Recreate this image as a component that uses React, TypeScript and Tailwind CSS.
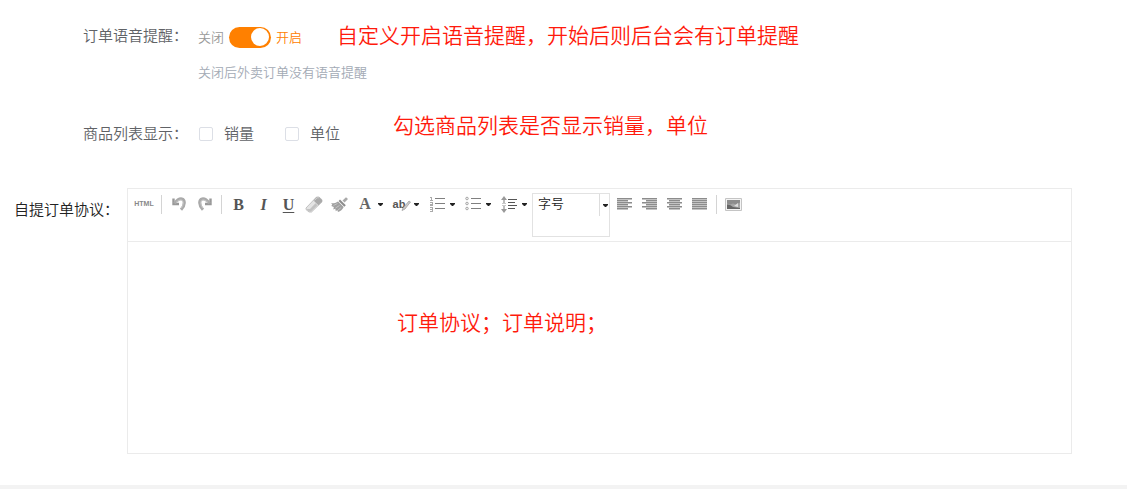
import { useState, type ReactNode } from "react";

const listLines = [3, 8, 13];

function ToolButton({ label, className = "w-[25px]", children }: { label: string; className?: string; children: ReactNode }) {
  return (
    <button type="button" aria-label={label} title={label} className={`flex h-[22px] shrink-0 items-center justify-center ${className}`}>
      {children}
    </button>
  );
}

function Caret() {
  return (
    <svg width="5" height="3" viewBox="0 0 5 3" className="shrink-0" aria-hidden="true">
      <path d="M0 0h5v1L3 3H2L0 1z" fill="#222" />
    </svg>
  );
}

/* Icon with a drop arrow beside it */
function MenuButton({ label, children }: { label: string; children: ReactNode }) {
  return (
    <button type="button" aria-label={label} title={label} className="flex h-[22px] w-9 shrink-0 items-center">
      <span className="flex w-[26px] items-center justify-center">{children}</span>
      <Caret />
    </button>
  );
}

function Separator() {
  return <span className="mx-1 mt-0.5 h-[19px] w-px shrink-0 bg-[#d4d4d4]" />;
}

function UndoIcon({ flip = false }: { flip?: boolean }) {
  return (
    <svg width="14" height="14" viewBox="0 0 14 14" className={flip ? "-scale-x-100" : ""} aria-hidden="true">
      <path d="M1.500 1.500v5.500h5.500" fill="none" stroke="#999" strokeWidth="2.400" />
      <path d="M2.500 6.500C5 3 7.500 1.500 9.800 1.900c3.400.7 3.600 6.300-.8 10.900" fill="none" stroke="#aaa" strokeWidth="3" />
      <path d="M4 5.500C6 3.500 8 2.700 9.300 3c2.600.6 2.400 4.500 0 8.200" fill="none" stroke="#c9c9c9" strokeWidth="1" />
    </svg>
  );
}

function EraserIcon() {
  return (
    <svg width="18" height="17" viewBox="0 0 18 17" aria-hidden="true">
      <path d="M1 12 11.500 1h2.500l3 2.800v2L6.500 16H4l-3-2.500z" fill="#e4e4e4" stroke="#b5b5b5" strokeWidth=".8" />
      <path d="m8.500 4.500 3-3.200H14l3 2.700v1.800l-3.600 3.400z" fill="#aaa" />
      <path d="m9.500 4.500 2.700-2.700h1.600" fill="none" stroke="#ccc" />
      <path d="M1.500 13 4 15.500h2l6.500-6.200-2-2L5 13z" fill="#c2c2c2" />
    </svg>
  );
}

function BrushIcon() {
  return (
    <svg width="17" height="15" viewBox="0 0 17 15" aria-hidden="true">
      <path d="M11.500 3.500 15 .3 17 2l-3.400 3.500z" fill="#aaa" />
      <path d="m9 2.600 5.800 5.600-1.500 1.500L7.600 4z" fill="#8c8c8c" />
      <path d="m7 4.500 5.700 5.600C11.500 12.500 9.500 14.500 7 15l-.7-2-1.500 1.300-.5-2.500-2 .8.500-2.600L.3 9l1-1.500L0 6.300C2.500 6.500 5 6 7 4.500z" fill="#a0a0a0" />
      <path d="m2.500 8.500 4-2M4.500 11l4-2.500M7 13l3.200-2.500" stroke="#ccc" strokeWidth=".8" />
    </svg>
  );
}

function OrderedIcon() {
  return (
    <svg width="16" height="16" viewBox="0 0 16 16" shapeRendering="crispEdges" aria-hidden="true">
      {listLines.map((y) => (
        <path key={y} d={`M6 ${y - 0.5}h10`} stroke="#808080" />
      ))}
      <path d="M1 1.500h1v3M1 4.500h3M1 6.500h2.500v1.500H1v1.500h3M1 11.500h2.500v4H1M1 13.500h2" fill="none" stroke="#aaa" />
    </svg>
  );
}

function BulletIcon() {
  return (
    <svg width="16" height="16" viewBox="0 0 16 16" aria-hidden="true">
      {listLines.map((y) => (
        <g key={y}>
          <path d={`M6 ${y - 0.5}h10`} stroke="#808080" />
          <circle cx="2" cy={y - 0.5} r="1.300" fill="#eee" stroke="#999" strokeWidth=".8" />
        </g>
      ))}
    </svg>
  );
}

function LineHeightIcon() {
  return (
    <svg width="17" height="17" viewBox="0 0 17 17" aria-hidden="true">
      <path d="M7 3.500h9M7 6.500h7M7 9.500h9M7 12.500h7" stroke="#555" strokeWidth="1.200" />
      <path d="M3 2v5M3 10v5" stroke="#a6a6a6" strokeWidth="1.500" />
      <path d="M3 0 6 4H0zM3 17l3-4H0z" fill="#999" />
      <path d="M1 7.500h4M1 9.500h4" stroke="#bbb" strokeWidth=".8" />
    </svg>
  );
}

const alignRows = {
  left: [[0, 15], [0, 11], [0, 15], [0, 11], [0, 15], [0, 11]],
  right: [[0, 15], [4, 15], [0, 15], [4, 15], [0, 15], [4, 15]],
  center: [[0, 15], [2, 13], [0, 15], [2, 13], [0, 15], [2, 13]],
  justify: [[0, 15], [0, 15], [0, 15], [0, 15], [0, 15], [0, 15]],
};

function AlignIcon({ kind }: { kind: keyof typeof alignRows }) {
  return (
    <svg width="15" height="12" viewBox="0 0 15 12" shapeRendering="crispEdges" aria-hidden="true">
      {alignRows[kind].map(([from, to], i) => (
        <g key={i}>
          <path d={`M${from} ${i * 2 + 0.5}H${to}`} stroke="#8c8c8c" />
          <path d={`M${from} ${i * 2 + 1.5}H${to}`} stroke="#c4c4c4" />
        </g>
      ))}
    </svg>
  );
}

function ImageIcon() {
  return (
    <svg width="17" height="13" viewBox="0 0 17 13" aria-hidden="true">
      <path d="M.5.500h16v12H.5z" fill="#f4f4f4" stroke="#c4c4c4" />
      <path d="M2 2h13v9H2z" fill="#a6a6a6" />
      <path d="M2 2h13v2.500l-4 2-3-1-3 1-3-1z" fill="#8c8c8c" />
      <path d="m9 8 4-3v4z" fill="#ddd" />
      <path d="M2 6.500c3 0 4 1 6 2.500l7 1v1H2z" fill="#666" />
    </svg>
  );
}

function Note({ children, className = "" }: { children: ReactNode; className?: string }) {
  return <p className={`text-[21px] leading-[26px] text-[#ff1a0c] ${className}`}>{children}</p>;
}

function CheckField({ id, label }: { id: string; label: string }) {
  return (
    <span className="flex items-center">
      <input id={id} type="checkbox" className="size-3.5 appearance-none rounded-xs border border-[#dcdfe6] bg-white checked:bg-[#ff8000]" />
      <label htmlFor={id} className="pb-0.5 pl-[11px] text-[15px] leading-[28px] text-[#606266]">
        {label}
      </label>
    </span>
  );
}

function Editor() {
  return (
    <div className="min-w-0 flex-1 border border-[#ebebeb]">
      {/* Toolbar */}
      <div role="toolbar" aria-label="编辑工具" className="flex h-[53px] items-start border-b border-[#ebebeb] pt-1 pl-[3px] text-[#555]">
        <ToolButton label="HTML代码" className="w-[26px]">
          <span className="font-['Liberation_Sans',sans-serif] text-[7px] font-bold text-[#888]">HTML</span>
        </ToolButton>
        <Separator />
        <ToolButton label="后退" className="w-[26px]">
          <UndoIcon />
        </ToolButton>
        <ToolButton label="前进" className="w-[25px]">
          <UndoIcon flip />
        </ToolButton>
        <Separator />
        <ToolButton label="粗体">
          <span className="pt-0.5 font-['Liberation_Serif',serif] text-base font-bold">B</span>
        </ToolButton>
        <ToolButton label="斜体">
          <span className="pt-0.5 font-['Liberation_Serif',serif] text-base font-bold italic">I</span>
        </ToolButton>
        <ToolButton label="下划线">
          <span className="pt-0.5 font-['Liberation_Serif',serif] text-base font-bold underline underline-offset-2">U</span>
        </ToolButton>
        <ToolButton label="删除格式">
          <EraserIcon />
        </ToolButton>
        <ToolButton label="格式刷" className="w-[26px]">
          <BrushIcon />
        </ToolButton>
        <MenuButton label="文字颜色">
          <span className="font-['Liberation_Serif',serif] text-base font-bold text-[#666]">A</span>
        </MenuButton>
        <MenuButton label="文字背景">
          <span className="relative pr-1 font-['Liberation_Sans',sans-serif] text-[11px] font-bold">
            ab
            <svg width="10" height="11" viewBox="0 0 10 11" className="absolute top-1 left-2" aria-hidden="true">
              <path d="m2 8 6-7 1.500 1L4 9l-3 1.500z" fill="#ccc" stroke="#999" strokeWidth=".7" />
            </svg>
          </span>
        </MenuButton>
        <MenuButton label="编号">
          <OrderedIcon />
        </MenuButton>
        <MenuButton label="项目符号">
          <BulletIcon />
        </MenuButton>
        <MenuButton label="行距">
          <LineHeightIcon />
        </MenuButton>
        <div className="mr-0.5 h-11 w-[78px] shrink-0 border border-[#e2e2e2]">
          <div className="flex h-[22px] items-center">
            <select aria-label="字号" className="h-[22px] min-w-0 flex-1 appearance-none border-r border-[#ddd] pb-1 pl-[5px] text-[13px] leading-[18px] text-[#222]">
              <option>字号</option>
            </select>
            <span className="pr-px pl-[3px]">
              <Caret />
            </span>
          </div>
        </div>
        <ToolButton label="左对齐">
          <AlignIcon kind="left" />
        </ToolButton>
        <ToolButton label="右对齐">
          <AlignIcon kind="right" />
        </ToolButton>
        <ToolButton label="居中">
          <AlignIcon kind="center" />
        </ToolButton>
        <ToolButton label="两端对齐">
          <AlignIcon kind="justify" />
        </ToolButton>
        <Separator />
        <ToolButton label="图片">
          <ImageIcon />
        </ToolButton>
      </div>

      {/* Writing area */}
      <div className="relative">
        <textarea id="agreement" className="block h-[211px] w-full resize-none p-2 text-[15px] outline-none" />
        <Note className="pointer-events-none absolute top-[66px] left-[269px]">订单协议；订单说明；</Note>
      </div>
    </div>
  );
}

export default function App() {
  const [voice, setVoice] = useState(true);

  return (
    <main className="bg-white font-['Noto_Sans_CJK_SC',sans-serif] font-[350]">
      {/* Voice reminder */}
      <div className="flex pt-[21px] pl-[83px]">
        <span id="voice-label" className="w-[115px] shrink-0 text-[15px] leading-[28px] text-[#606266]">
          订单语音提醒：
        </span>
        <div>
          <div className="flex h-8 items-center text-[13px]">
            <span className="w-[31px] text-[#999]">关闭</span>
            <button
              type="button"
              role="switch"
              aria-checked={voice}
              aria-labelledby="voice-label"
              onClick={() => setVoice(!voice)}
              className={`flex h-[21px] w-[42px] items-center rounded-full px-0.5 ${voice ? "justify-end bg-[#ff8000]" : "bg-[#dcdfe6]"}`}
            >
              <span className="size-[18px] rounded-full bg-white" />
            </button>
            <span className="ml-[5px] text-[#ff8000]">开启</span>
          </div>
          <p className="mt-2 text-[13px] leading-[22px] text-[#a3aab5]">关闭后外卖订单没有语音提醒</p>
        </div>
        <Note className="-ml-[30px]">自定义开启语音提醒，开始后则后台会有订单提醒</Note>
      </div>

      {/* Goods list columns */}
      <div role="group" aria-labelledby="columns-label" className="mt-7 flex items-start pl-[83px]">
        <span id="columns-label" className="mt-2 w-[116px] shrink-0 text-[15px] leading-[28px] text-[#606266]">
          商品列表显示：
        </span>
        <div className="mt-2 flex gap-[31px]">
          <CheckField id="sales" label="销量" />
          <CheckField id="unit" label="单位" />
        </div>
        <Note className="ml-[53px]">勾选商品列表是否显示销量，单位</Note>
      </div>

      {/* Pickup agreement */}
      <div className="mt-[39px] flex pr-[55px] pl-3.5">
        <label htmlFor="agreement" className="mt-[7px] w-[113px] shrink-0 text-[15px] leading-[28px] text-[#222]">
          自提订单协议：
        </label>
        <Editor />
      </div>

      <div className="mt-[31px] h-1 bg-[#f3f3f3]" />
    </main>
  );
}
